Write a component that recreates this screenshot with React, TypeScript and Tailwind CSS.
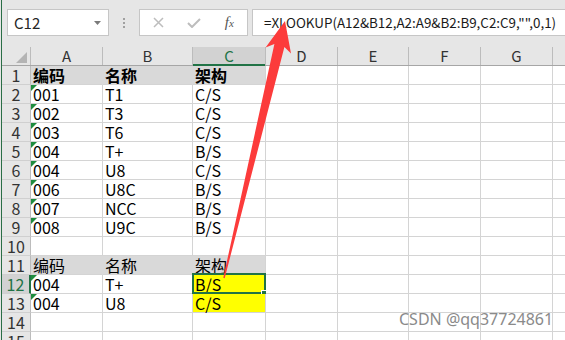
import React from 'react';

type Fill = 'none' | 'gray' | 'yellow';
interface CellDef {
  t?: string;
  fill?: Fill;
  tri?: boolean;
  bold?: boolean;
  sel?: boolean;
}

const cols = [
  { key: 'A', w: 'w-[72px]' },
  { key: 'B', w: 'w-[90px]' },
  { key: 'C', w: 'w-[73px]' },
  { key: 'D', w: 'w-[72px]' },
  { key: 'E', w: 'w-[71px]' },
  { key: 'F', w: 'w-[72px]' },
  { key: 'G', w: 'w-[72px]' },
  { key: 'H', w: 'w-[60px]' },
];

const d = (a: string, b: string, c: string): CellDef[] => [
  { t: a, tri: true },
  { t: b },
  { t: c },
];

const rows: CellDef[][] = [
  [
    { t: '编码', fill: 'gray', bold: true },
    { t: '名称', fill: 'gray', bold: true },
    { t: '架构', fill: 'gray', bold: true },
  ],
  d('001', 'T1', 'C/S'),
  d('002', 'T3', 'C/S'),
  d('003', 'T6', 'C/S'),
  d('004', 'T+', 'B/S'),
  d('004', 'U8', 'C/S'),
  d('006', 'U8C', 'B/S'),
  d('007', 'NCC', 'B/S'),
  d('008', 'U9C', 'B/S'),
  [],
  [
    { t: '编码', fill: 'gray' },
    { t: '名称', fill: 'gray' },
    { t: '架构', fill: 'gray' },
  ],
  [{ t: '004', tri: true }, { t: 'T+' }, { t: 'B/S', fill: 'yellow', sel: true }],
  [{ t: '004', tri: true }, { t: 'U8' }, { t: 'C/S', fill: 'yellow' }],
  [],
  [],
];

const bgCls: Record<Fill, string> = {
  none: 'bg-white',
  gray: 'bg-[#d9d9d9]',
  yellow: 'bg-[#ffff00]',
};
const rCls: Record<Fill, string> = {
  none: 'border-r-[#d4d4d4]',
  gray: 'border-r-[#d9d9d9]',
  yellow: 'border-r-[#ffff00]',
};
const bCls: Record<Fill, string> = {
  none: 'border-b-[#d4d4d4]',
  gray: 'border-b-[#d9d9d9]',
  yellow: 'border-b-[#ffff00]',
};

const FONT = "font-['Noto_Sans_CJK_SC','Noto_Sans',sans-serif]";

function Cell({ w, c, right, below }: { w: string; c?: CellDef; right?: Fill; below?: Fill }) {
  const fill: Fill = c?.fill ?? 'none';
  const rc = fill !== 'none' && right === fill ? rCls[fill] : rCls.none;
  const bc = fill !== 'none' && below === fill ? bCls[fill] : bCls.none;
  return (
    <div className={`relative shrink-0 h-full border-r border-b flex items-end pl-[2px] ${w} ${bgCls[fill]} ${rc} ${bc}`}>
      {c?.tri && (
        <div className="absolute left-0 top-0 w-0 h-0 border-t-[6px] border-r-[6px] border-t-[#1e8c3e] border-r-transparent" />
      )}
      {c?.t && (
        <span className={`text-[16px] leading-[18px] text-black whitespace-nowrap ${c.bold ? 'font-bold' : 'font-normal'}`}>
          {c.t}
        </span>
      )}
      {c?.sel && (
        <>
          <div className="absolute left-[-1px] top-[-2px] right-[-1px] bottom-[-1px] border-2 border-[#217346]" />
          <div className="absolute right-[-2px] bottom-[-3px] w-[6px] h-[6px] bg-[#217346] border border-white" />
        </>
      )}
    </div>
  );
}

function Arrow() {
  return (
    <svg className="absolute left-0 top-0 pointer-events-none" width="565" height="340" viewBox="0 0 565 340">
      <polygon
        points="285,21 291,53.5 284.4,47 224.7,278.2 223.3,277.8 274.4,44 265.6,47.5"
        fill="#fc3b3b"
      />
    </svg>
  );
}

export default function App() {
  return (
    <div className={`relative w-[565px] h-[340px] overflow-hidden bg-[#e6e6e6] flex ${FONT}`}>
      <div className="w-[1px] shrink-0 bg-[#e6e6e6]" />
      <div className="w-[1px] shrink-0 bg-[#2a6e46]" />
      <div className="flex-1 flex flex-col min-w-0">
        {/* formula bar */}
        <div className="h-[47px] shrink-0 flex items-start pt-[9px] bg-[#e6e6e6]">
          <div className="ml-[5px] w-[102px] h-[27px] shrink-0 bg-white border border-[#c6c6c6] flex items-center justify-between pl-[6px] pr-[7px]">
            <span className="text-[15px] text-[#262626] leading-none">C12</span>
            <svg width="7" height="4" viewBox="0 0 7 4">
              <polygon points="0,0 7,0 3.5,4" fill="#7a7a7a" />
            </svg>
          </div>
          <div className="w-[30px] h-[27px] shrink-0 flex flex-col items-center justify-center gap-[2px]">
            <div className="w-[2px] h-[2px] bg-[#a0a0a0]" />
            <div className="w-[2px] h-[2px] bg-[#a0a0a0]" />
            <div className="w-[2px] h-[2px] bg-[#a0a0a0]" />
          </div>
          <div className="w-[109px] h-[27px] shrink-0 bg-white border border-[#c6c6c6] flex items-center pl-[1px]">
            <div className="w-[36px] flex justify-center">
              <svg width="11" height="11" viewBox="0 0 11 11">
                <path d="M1 1 L10 10 M10 1 L1 10" stroke="#bdbdbd" strokeWidth="1.5" fill="none" />
              </svg>
            </div>
            <div className="w-[36px] flex justify-center">
              <svg width="14" height="10" viewBox="0 0 14 10">
                <path d="M1 5 L5 9 L13 1" stroke="#bdbdbd" strokeWidth="2" fill="none" />
              </svg>
            </div>
            <div className="w-[36px] flex justify-center items-baseline font-['Liberation_Serif',serif] italic text-[#555]">
              <span className="text-[15px] leading-none">f</span>
              <span className="text-[11px] leading-none">x</span>
            </div>
          </div>
          <div className="ml-[4px] flex-1 h-[27px] bg-white border border-r-0 border-[#c6c6c6] flex items-center pl-[11px] min-w-0">
            <span className="text-[13.4px] text-[#1a1a1a] whitespace-nowrap leading-none">
              =XLOOKUP(A12&amp;B12,A2:A9&amp;B2:B9,C2:C9,"",0,1)
            </span>
          </div>
        </div>

        {/* column header */}
        <div className="h-[19px] shrink-0 flex bg-[#e6e6e6] border-b border-[#a6a6a6]">
          <div className="w-[29px] shrink-0 h-full border-r border-[#bcbcbc] relative">
            <svg className="absolute right-[3px] bottom-[2px]" width="11" height="11" viewBox="0 0 11 11">
              <polygon points="11,0 11,11 0,11" fill="#b4b4b4" />
            </svg>
          </div>
          {cols.map((c) =>
            c.key === 'C' ? (
              <div key={c.key} className={`${c.w} shrink-0 h-full bg-[#d2d2d2] border-r border-[#bcbcbc] flex items-end justify-center relative`}>
                <span className="text-[15px] leading-[18px] text-[#217346]">{c.key}</span>
                <div className="absolute left-0 right-0 bottom-[-1px] h-[2px] bg-[#217346]" />
              </div>
            ) : (
              <div key={c.key} className={`${c.w} shrink-0 h-full border-r border-[#bcbcbc] flex items-end justify-center`}>
                <span className="text-[15px] leading-[18px] text-[#333]">{c.key}</span>
              </div>
            )
          )}
        </div>

        {/* rows */}
        {rows.map((r, i) => {
          const n = i + 1;
          const hl = n === 12;
          const next = rows[i + 1] ?? [];
          return (
            <div key={n} className="h-[19px] shrink-0 flex">
              <div
                className={`w-[29px] shrink-0 h-full border-b border-b-[#d0d0d0] flex items-end justify-center ${
                  hl ? 'bg-[#d2d2d2] border-r-2 border-r-[#217346]' : 'bg-[#e6e6e6] border-r border-r-[#bcbcbc]'
                }`}
              >
                <span className={`text-[16px] leading-[18px] ${hl ? 'text-[#217346]' : 'text-[#333]'}`}>{n}</span>
              </div>
              {cols.map((c, j) => (
                <Cell
                  key={c.key}
                  w={c.w}
                  c={r[j]}
                  right={r[j + 1]?.fill ?? 'none'}
                  below={next[j]?.fill ?? 'none'}
                />
              ))}
            </div>
          );
        })}
      </div>

      <Arrow />
      <div className="absolute left-[399px] top-[309px] text-[16px] leading-[20px] text-[#8a8a8a] font-['Noto_Sans',sans-serif] whitespace-nowrap">
        CSDN @qq37724861
      </div>
    </div>
  );
}
